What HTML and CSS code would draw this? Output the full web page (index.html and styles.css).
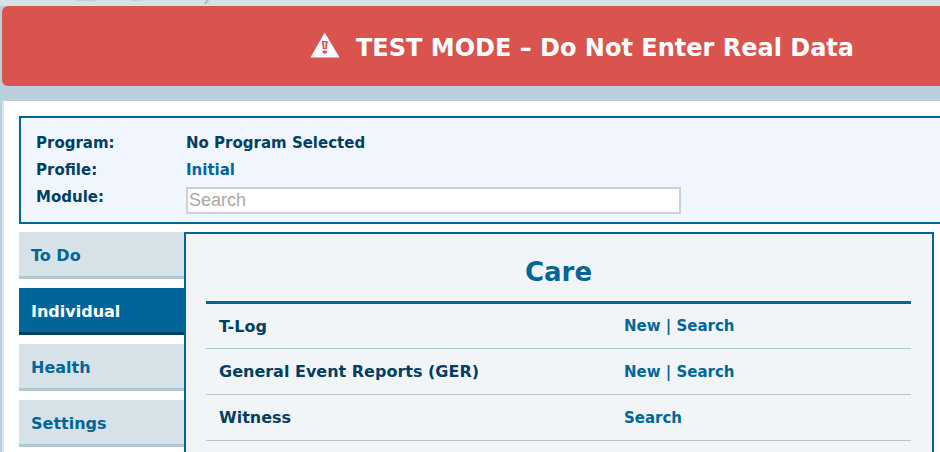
FILE: index.html
```html
<!DOCTYPE html>
<html lang="en">
<head>
    <meta charset="UTF-8">
    <meta name="viewport" content="width=device-width, initial-scale=1.0">
    <title>Dashboard</title>
    <link rel="stylesheet" href="styles.css">
</head>
<body>
    <header class="top-strip">
        <svg class="logo-edge" width="220" height="6" viewBox="0 0 220 6" aria-hidden="true">
            <path d="M74 0h24l-4 1h-16zM130 0h14l-4 1h-8z" fill="#c6d1d6"/>
            <path d="M208 0l-3 4" stroke="#a9b7be" stroke-width="2"/>
        </svg>
    </header>

    <div class="test-banner" role="alert">
        <svg class="warning-icon" width="30" height="26" viewBox="0 0 30 26" aria-hidden="true">
            <path d="M14.700 0.500L29.500 25.500H0.500z" fill="#fff"/>
            <path d="M11.800 9h6l-1 8h-4z" fill="#d9534f"/>
            <path d="M13.700 10h2.200l-.4 6h-1.400z" fill="#f3c9c7"/>
            <ellipse cx="14.800" cy="20" rx="2.400" ry="1.800" fill="#d9534f"/>
        </svg>
        <span class="banner-text">TEST MODE – Do Not Enter Real Data</span>
    </div>

    <main class="page">
        <section class="summary">
            <div class="summary-row">
                <span class="summary-label">Program:</span>
                <span>No Program Selected</span>
            </div>
            <div class="summary-row">
                <span class="summary-label">Profile:</span>
                <a href="#">Initial</a>
            </div>
            <div class="summary-row">
                <label class="summary-label" for="module">Module:</label>
                <input type="text" id="module" placeholder="Search">
            </div>
        </section>

        <div class="dashboard">
            <nav class="tabs">
                <a class="tab" href="#">To Do</a>
                <a class="tab active" href="#">Individual</a>
                <a class="tab" href="#">Health</a>
                <a class="tab" href="#">Settings</a>
            </nav>

            <section class="panel">
                <table class="modules">
                    <caption>Care</caption>
                    <tbody>
                        <tr>
                            <th scope="row">T-Log</th>
                            <td><a href="#">New</a> | <a href="#">Search</a></td>
                        </tr>
                        <tr>
                            <th scope="row">General Event Reports (GER)</th>
                            <td><a href="#">New</a> | <a href="#">Search</a></td>
                        </tr>
                        <tr>
                            <th scope="row">Witness</th>
                            <td><a href="#">Search</a></td>
                        </tr>
                    </tbody>
                </table>
            </section>
        </div>
    </main>
</body>
</html>
```

FILE: styles.css
```css
* {
    box-sizing: border-box;
    margin: 0;
    padding: 0;
}

body {
    background-color: #bbcfda;
    color: #003f64;
    font-family: Verdana, "DejaVu Sans", sans-serif;
    font-size: 15px;
    font-weight: bold;
}

a {
    color: #006699;
    text-decoration: none;
}

.top-strip {
    height: 6px;
    background-color: #d5e1e6;
}

.logo-edge {
    display: block;
}

.test-banner {
    display: flex;
    align-items: center;
    justify-content: center;
    gap: 16px;
    height: 80px;
    margin-left: 2px;
    padding: 0 0 2px 222px;
    border-radius: 6px 0 0 6px;
    background-color: #d9534f;
    color: #fff;
    font-size: 24px;
}

.banner-text {
    padding-top: 6px;
}

.page {
    margin: 15px 0 0 2px;
    padding: 15px 0 0 15px;
    border-left: 2px solid #d7e2e8;
    background-color: #fff;
}

.summary {
    padding: 12px 15px 8px;
    border: 2px solid #006699;
    border-right: none;
    background-color: #f1f6fe;
}

.summary-row {
    display: flex;
    min-height: 27px;
    line-height: 27px;
}

.summary-label {
    width: 150px;
}

.summary input {
    width: 495px;
    height: 27px;
    margin-top: 3px;
    padding: 0 1px;
    border: 2px solid #d0d0d0;
    background-color: #fff;
    font-family: "Liberation Sans", Arial, sans-serif;
    font-size: 18px;
}

.summary input::placeholder {
    color: #a9a9a9;
}

.dashboard {
    display: flex;
    margin: 8px 6px 0 0;
}

.tabs {
    display: flex;
    flex-direction: column;
    gap: 9px;
    width: 165px;
}

.tab {
    height: 47px;
    padding-left: 12px;
    border-bottom: 3px solid #afc7d5;
    background-color: #d7e2e8;
    font-size: 16px;
    line-height: 48px;
}

.tab.active {
    border-bottom-color: #003f64;
    background-color: #006699;
    color: #fff;
}

.panel {
    flex: 1;
    min-height: 240px;
    padding: 0 21px 20px 20px;
    border: 2px solid #006699;
    background-color: #f1f5f7;
}

.modules {
    width: 100%;
    border-collapse: collapse;
    table-layout: fixed;
}

.modules caption {
    height: 67px;
    color: #006699;
    font-size: 26px;
    line-height: 76px;
}

.modules tbody {
    border-top: 3px solid #006699;
}

.modules tr {
    height: 46px;
    border-bottom: 1px solid #afc7d5;
}

.modules th {
    width: 59%;
    padding-left: 13px;
    font-size: 16px;
    text-align: left;
}

.modules td {
    padding-left: 2px;
    color: #006699;
}
```
